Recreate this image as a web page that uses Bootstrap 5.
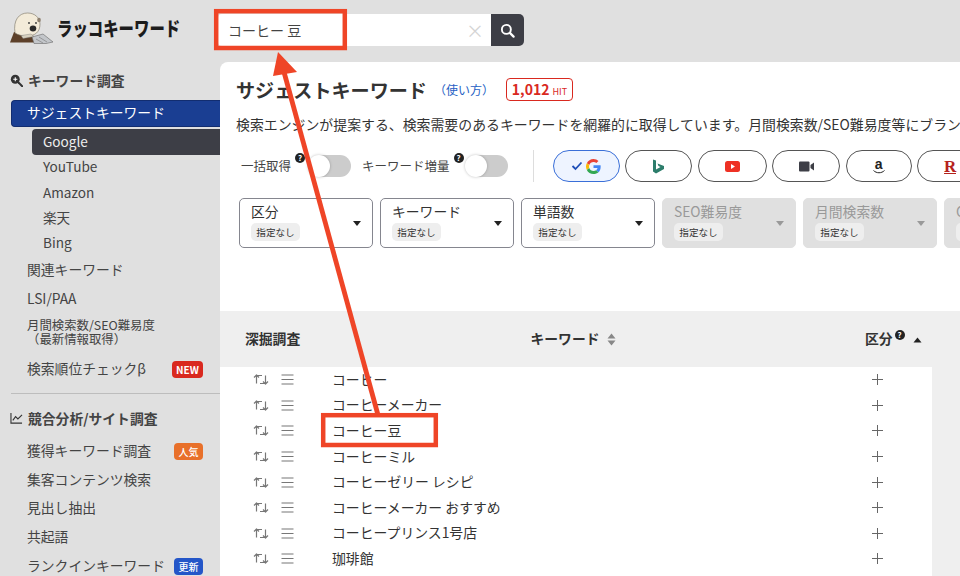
<!DOCTYPE html>
<html lang="ja">
<head>
<meta charset="utf-8">
<title>ラッコキーワード</title>
<link href="https://cdn.jsdelivr.net/npm/bootstrap@5.3.0/dist/css/bootstrap.min.css" rel="stylesheet">
<style>
html,body{height:100%;overflow:hidden}
body{background:#e0e0e0;color:#333;font-family:"Noto Sans CJK JP","Noto Sans",sans-serif;font-size:13.8px;width:960px;height:576px;position:relative}
.top-bar{height:62px;padding:0 0 2px 10px}
.brand-mark{width:46px;height:36px;flex:none}
.brand-name{font-weight:900;font-size:19.5px;color:#1c1c1c;display:inline-block;transform:scaleX(.79);transform-origin:left center;width:161px;margin:-5px 0 0 1px;white-space:nowrap;line-height:1}
.search-wrap{width:306px;height:32px}
.search-field{flex:1;background:#fff;display:flex;align-items:center;padding:0 10px;font-size:14px;color:#444;justify-content:space-between;border-radius:4px 0 0 4px}
.search-x{color:#d4d4d4;font-size:18px;line-height:1;margin-right:-3px}
.search-go{width:33px;background:#3d3e46;border-radius:0 5px 5px 0;padding:0;border:0}
.page-body{height:514px}
.side-col{width:220px;flex:none}
.side-col>*{flex:none}
.side-head{font-weight:700;color:#444;padding-left:10px;gap:5px;height:28px;padding-bottom:2px}
.side-head.first{height:24px;margin-top:7px}
.side-item{color:#444;display:flex;align-items:center;justify-content:space-between;padding:0 17px 2px 27px;height:28.7px;text-decoration:none;white-space:nowrap}
.side-item.current{background:#1a3e92;color:#fff;height:27px;margin:7px 0 0 11px;padding-left:15px;border-radius:4px 0 0 4px;border:1px solid #122d70;border-right:0}
.side-sub{color:#444;display:flex;align-items:center;height:25.3px;padding:0 0 2px 43px;text-decoration:none;font-size:13.6px}
.side-sub.current{background:#3d3e46;color:#eee;height:26px;margin:2px 0 0 32px;padding-left:11px;border-radius:4px 0 0 4px}
.side-item.two-line{height:40px;font-size:12.4px;display:block;padding-top:4.400px}
.two-line span{display:block;height:14px;line-height:14px}
.side-item.tall{height:31px}
.side-item .tag-mini{margin-bottom:-2px}
.side-rule{border-top:1px solid #bdbdbd;margin:8px 0 11.500px 11px;opacity:1}
.tag-mini{font-size:10px;font-weight:700;color:#fff;border-radius:4px;height:17px;line-height:17px;padding:0;text-align:center;width:29px;display:block}
.tag-new{background:#d9291f;width:31px}
.tag-pop{background:#e8702a;font-weight:500}
.tag-upd{background:#2456c8;font-weight:500}
.main-col{flex:1;min-width:0;background:#fff;border-radius:8px 0 0 0;overflow:hidden}
.head-block{height:249px;padding:16px 0 0 16px;overflow:hidden}
.page-title{font-size:19.1px;font-weight:700;color:#333;margin:0;line-height:20px;white-space:nowrap}
.how-link{color:#1f5fc4;font-size:12px;text-decoration:none;margin-left:7px;white-space:nowrap}
.hit-pill{border:1px solid #d9291f;border-radius:4px;color:#d9291f;font-weight:700;font-size:14px;height:23px;width:67px;margin-left:12px;line-height:21px;text-align:center;white-space:nowrap}
.hit-pill span{font-size:9px;font-weight:400;margin-left:3px}
.lede{font-size:13.9px;margin:13px 0 0;white-space:nowrap;line-height:20px;color:#333}
.ctrl-row{height:42px;margin-top:11px;padding-left:5px;white-space:nowrap}
.tgl-label{font-size:12.5px;color:#444}
.tgl-label.second{margin-left:11px}
.q-dot{width:10px;height:10px;border-radius:50%;background:#222;color:#fff;font-size:8px;font-weight:700;line-height:10px;text-align:center;display:inline-block;flex:none}
.ctrl-row .q-dot{align-self:flex-start;margin:8px 0 0 4px}
.tgl{width:39px;height:22px;border-radius:11px;background:#ccc;position:relative;flex:none;margin-left:7px}
.tgl.second{margin-left:5px}
.tgl::before{content:"";position:absolute;left:-4px;top:0;width:22px;height:22px;border-radius:50%;background:#fff;box-shadow:0 0 3px rgba(0,0,0,.25)}
.v-rule{width:1px;height:32px;background:#ddd;margin:0 19px 0 25px;flex:none}
.chan-set{gap:5.500px}
.chan{height:32px;border:1px solid #555;border-radius:16px;background:#fff;flex:none;display:flex;align-items:center;justify-content:center;gap:3px;padding:0;width:67px}
.chan.on{border-color:#3a6fd8;background:#eef4ff}
.chan.w69{width:69px}.chan.w68{width:68px}.chan.w66{width:66px}
.chan.last{justify-content:flex-start;padding-left:26px}
.amz{font-family:"Liberation Sans",sans-serif;font-weight:700;font-size:14px;color:#222;line-height:12px;display:flex;flex-direction:column;align-items:center}
.rak{font-family:"Liberation Serif",serif;font-weight:700;font-size:17px;color:#b5221c;line-height:1;border-bottom:1px solid #b5221c;height:16px}
.filter-row{gap:7px;margin-top:11px;margin-left:3px}
.filter-box{width:134px;height:50px;border:1px solid #85868f;border-radius:5px;flex:none;position:relative;padding:2px 11px;background:#fff;line-height:20px;white-space:nowrap}
.filter-box.off{background:#e0e0e0;border-color:#e0e0e0;color:#999}
.none-chip{background:#eee;color:#333;border-radius:5px;font-size:9.600px;display:block;width:49px;height:18px;line-height:18px;text-align:center;margin:2px 0 0}
.down-tri{position:absolute;right:11px;top:22px;width:0;height:0;border:4.500px solid transparent;border-top:5px solid #222;border-bottom:0}
.filter-box.off .down-tri{border-top-color:#999}
.kw-shell{background:#efefef}
.kw-table{width:740px;table-layout:fixed;margin:0;--bs-table-bg:transparent;border-collapse:collapse}
.kw-table col:nth-child(1){width:112px}
.kw-table col:nth-child(2){width:490px}
.kw-table col:nth-child(3){width:110px}
.kw-table col:nth-child(4){width:28px}
.kw-table th{height:56px;vertical-align:middle;font-weight:700;background:#efefef;padding:0 0 2px;font-size:13.800px;color:#333;border:0;box-shadow:none;white-space:nowrap}
.kw-table th:nth-child(1){padding-left:25px}
.kw-table th:nth-child(2){padding-right:7px}
.kw-table th:nth-child(3){padding-left:43px}
.kw-table th .q-dot{margin:0 0 0 2px;vertical-align:6px}
.kw-table td{height:25.600px;padding:0;background:#fff;vertical-align:middle;border:0;font-size:13.850px;color:#333;line-height:1;box-shadow:none;white-space:nowrap}
.kw-table td.edge{background:#efefef}
.row-tools{display:flex;gap:12px;padding-left:33px;align-items:center}
.plus-mark{display:block;margin:0 auto 0 50px}
.sort-tri{display:inline-block;vertical-align:middle;margin-left:6px}
.sort-tri.up{margin-left:8px}
.mark-layer{position:absolute;left:0;top:0;pointer-events:none}
</style>
</head>
<body>
<svg width="0" height="0" class="position-absolute" aria-hidden="true">
  <symbol id="ic-loop" viewBox="0 0 16 13"><path d="M3.500 10.500V3.500Q3.500 2.500 4.500 2.500H9M1 4.500 3.500 2 6 4.500M12.500 2.500V9.500Q12.500 10.500 11.500 10.500H7M10 8.500 12.500 11 15 8.500" fill="none" stroke="#777" stroke-width="1.200" stroke-linejoin="round"/></symbol>
  <symbol id="ic-bars" viewBox="0 0 13 11"><path d="M.5 1h12M.5 5.500h12M.5 10h12" stroke="#777" stroke-width="1.200"/></symbol>
  <symbol id="ic-plus" viewBox="0 0 11 11"><path d="M5.500 0v11M0 5.500h11" stroke="#666" stroke-width="1"/></symbol>
</svg>
<header class="top-bar d-flex align-items-center">
  <svg class="brand-mark" viewBox="0 0 46 36" aria-hidden="true">
    <path d="M0 30.500 4 20 22 22 27 30.500Z" fill="#5d4029"/>
    <path d="M5 21C3 8 9 1 17.500 1 25 1 30 6 30 12 30 20 25 24 17 24 12 24 8 23 5 21Z" fill="#f3ebd9" stroke="#77705f" stroke-width=".6"/>
    <ellipse cx="29" cy="8" rx="1.800" ry="2.200" fill="#8d7f6e"/>
    <circle cx="19" cy="11" r=".9" fill="#333"/><circle cx="26" cy="11" r=".9" fill="#333"/>
    <ellipse cx="23" cy="16.500" rx="3.300" ry="3" fill="#2b2a2a"/>
    <path d="M22 25 33 22 43 30 36 31.500 24 31.500Z" fill="#c3c6ca" stroke="#666" stroke-width=".6"/>
    <path d="M29 25l8 5M26 27l7 4" stroke="#777" stroke-width=".6"/>
    <path d="M11 23.500l10-1.500 3 2.500-11 2Z" fill="#d8d1bf" stroke="#777" stroke-width=".4"/>
  </svg>
  <span class="brand-name">ラッコキーワード</span>
  <div class="search-wrap d-flex">
    <div class="search-field"><span>コーヒー 豆</span><span class="search-x">×</span></div>
    <button class="btn search-go d-flex align-items-center justify-content-center" type="button" aria-label="検索">
      <svg width="15" height="15" viewBox="0 0 16 16"><circle cx="6.800" cy="6.800" r="4.800" fill="none" stroke="#fff" stroke-width="2"/><path d="M10.500 10.500 14.500 14.500" stroke="#fff" stroke-width="2.400" stroke-linecap="round"/></svg>
    </button>
  </div>
</header>
<div class="page-body d-flex">
  <nav class="side-col d-flex flex-column">
    <div class="side-head first d-flex align-items-center">
      <svg width="13" height="13" viewBox="0 0 16 16"><circle cx="6.500" cy="6.500" r="5.500" fill="#333"/><path d="M10.500 10.500 15 15" stroke="#333" stroke-width="2.400" stroke-linecap="round"/><path d="M4 6.500h5M6.500 4v5" stroke="#fff" stroke-width="1.300"/></svg>
      <span>キーワード調査</span>
    </div>
    <a class="side-item current" href="#">サジェストキーワード</a>
    <a class="side-sub current" href="#">Google</a>
    <a class="side-sub" href="#">YouTube</a>
    <a class="side-sub" href="#">Amazon</a>
    <a class="side-sub" href="#">楽天</a>
    <a class="side-sub" href="#">Bing</a>
    <a class="side-item" href="#">関連キーワード</a>
    <a class="side-item" href="#">LSI/PAA</a>
    <a class="side-item two-line" href="#"><span>月間検索数/SEO難易度</span><span>（最新情報取得）</span></a>
    <a class="side-item tall" href="#"><span>検索順位チェックβ</span><span class="tag-mini tag-new">NEW</span></a>
    <hr class="side-rule">
    <div class="side-head d-flex align-items-center">
      <svg width="13" height="12" viewBox="0 0 14 13"><path d="M1 1v11h12" fill="none" stroke="#333" stroke-width="1.200"/><path d="M3 9l3-4 2.500 2.500L13 3" fill="none" stroke="#333" stroke-width="1.200"/></svg>
      <span>競合分析/サイト調査</span>
    </div>
    <a class="side-item mt-1" href="#"><span>獲得キーワード調査</span><span class="tag-mini tag-pop">人気</span></a>
    <a class="side-item" href="#">集客コンテンツ検索</a>
    <a class="side-item" href="#">見出し抽出</a>
    <a class="side-item" href="#">共起語</a>
    <a class="side-item" href="#"><span>ランクインキーワード</span><span class="tag-mini tag-upd">更新</span></a>
  </nav>
  <main class="main-col">
    <section class="head-block">
      <div class="d-flex align-items-center">
        <h1 class="page-title">サジェストキーワード</h1>
        <a class="how-link" href="#">（使い方）</a>
        <div class="hit-pill">1,012<span>HIT</span></div>
      </div>
      <p class="lede">検索エンジンが提案する、検索需要のあるキーワードを網羅的に取得しています。月間検索数/SEO難易度等にブランド</p>
      <div class="ctrl-row d-flex align-items-center">
        <span class="tgl-label">一括取得</span><span class="q-dot">?</span><span class="tgl"></span>
        <span class="tgl-label second">キーワード増量</span><span class="q-dot">?</span><span class="tgl second"></span>
        <span class="v-rule"></span>
        <div class="d-flex chan-set">
          <button class="chan on" type="button" aria-label="Google">
            <svg width="12" height="10" viewBox="0 0 12 10"><path d="M1.500 5 4.500 8 10.500 1.500" fill="none" stroke="#1f4fb8" stroke-width="1.800"/></svg>
            <svg width="15" height="15" viewBox="0 0 48 48"><path fill="#EA4335" d="M24 9.500c3.500 0 6.700 1.300 9.100 3.500l6.800-6.800C35.800 2.400 30.300 0 24 0 14.600 0 6.500 5.400 2.600 13.200l7.900 6.200C12.400 13.600 17.700 9.500 24 9.500z"/><path fill="#4285F4" d="M46.900 24.500c0-1.600-.1-3.100-.4-4.500H24v9h12.900c-.6 3-2.200 5.500-4.700 7.200l7.700 6c4.500-4.200 7-10.300 7-17.700z"/><path fill="#FBBC05" d="M10.500 28.600c-.5-1.400-.8-3-.8-4.600s.3-3.200.8-4.600l-7.900-6.200C.9 16.500 0 20.100 0 24s.9 7.500 2.600 10.800l7.900-6.200z"/><path fill="#34A853" d="M24 48c6.500 0 11.900-2.100 15.900-5.800l-7.700-6c-2.200 1.400-4.900 2.300-8.200 2.300-6.300 0-11.600-4.200-13.500-9.900l-7.900 6.200C6.500 42.600 14.600 48 24 48z"/></svg>
          </button>
          <button class="chan" type="button" aria-label="Bing">
            <svg width="13" height="15" viewBox="0 0 13 15"><path d="M1 0.500 4 1.500V10.500L8.500 8 6.500 7 5.500 4.500 12 7V10L4 14.500 1 12.500Z" fill="#2c7d6b"/></svg>
          </button>
          <button class="chan w69" type="button" aria-label="YouTube">
            <svg width="15" height="11" viewBox="0 0 15 11"><rect width="15" height="11" rx="2.500" fill="#ee3124"/><path d="M6 3 10 5.500 6 8Z" fill="#fff"/></svg>
          </button>
          <button class="chan w68" type="button" aria-label="動画">
            <svg width="15" height="11" viewBox="0 0 15 11"><rect width="10.500" height="10" y=".5" rx="1" fill="#3d3e46"/><path d="M11.500 4 15 1.500V9.500L11.500 7Z" fill="#3d3e46"/></svg>
          </button>
          <button class="chan w66" type="button" aria-label="Amazon">
            <span class="amz">a<svg width="12" height="4" viewBox="0 0 12 4"><path d="M.5 .5C3.500 3.500 8.500 3.500 11.500 .5" fill="none" stroke="#222" stroke-width="1"/></svg></span>
          </button>
          <button class="chan w66 last" type="button" aria-label="楽天">
            <span class="rak">R</span>
          </button>
        </div>
      </div>
      <div class="filter-row d-flex">
        <div class="filter-box">区分<span class="none-chip">指定なし</span><i class="down-tri"></i></div>
        <div class="filter-box">キーワード<span class="none-chip">指定なし</span><i class="down-tri"></i></div>
        <div class="filter-box">単語数<span class="none-chip">指定なし</span><i class="down-tri"></i></div>
        <div class="filter-box off">SEO難易度<span class="none-chip">指定なし</span><i class="down-tri"></i></div>
        <div class="filter-box off">月間検索数<span class="none-chip">指定なし</span><i class="down-tri"></i></div>
        <div class="filter-box off">CPC<span class="none-chip">指定なし</span><i class="down-tri"></i></div>
      </div>
    </section>
    <section class="kw-shell">
      <table class="table table-borderless kw-table">
        <colgroup><col><col><col><col></colgroup>
        <thead>
          <tr>
            <th>深掘調査</th>
            <th class="text-center">キーワード<svg class="sort-tri ms-2" width="9" height="13" viewBox="0 0 9 13"><path d="M4.500 .5 8.500 5.500H.5ZM4.500 12.500 .5 7.500H8.500Z" fill="#888"/></svg></th>
            <th>区分<span class="q-dot">?</span><svg class="sort-tri up" width="9" height="6" viewBox="0 0 9 6"><path d="M4.500 .5 8.500 5.500H.5Z" fill="#222"/></svg></th>
            <th></th>
          </tr>
        </thead>
        <tbody>
          <tr><td><div class="row-tools"><svg width="16" height="13"><use href="#ic-loop"/></svg><svg width="13" height="11"><use href="#ic-bars"/></svg></div></td><td>コーヒー</td><td><svg class="plus-mark" width="11" height="11"><use href="#ic-plus"/></svg></td><td class="edge"></td></tr>
          <tr><td><div class="row-tools"><svg width="16" height="13"><use href="#ic-loop"/></svg><svg width="13" height="11"><use href="#ic-bars"/></svg></div></td><td>コーヒーメーカー</td><td><svg class="plus-mark" width="11" height="11"><use href="#ic-plus"/></svg></td><td class="edge"></td></tr>
          <tr><td><div class="row-tools"><svg width="16" height="13"><use href="#ic-loop"/></svg><svg width="13" height="11"><use href="#ic-bars"/></svg></div></td><td>コーヒー豆</td><td><svg class="plus-mark" width="11" height="11"><use href="#ic-plus"/></svg></td><td class="edge"></td></tr>
          <tr><td><div class="row-tools"><svg width="16" height="13"><use href="#ic-loop"/></svg><svg width="13" height="11"><use href="#ic-bars"/></svg></div></td><td>コーヒーミル</td><td><svg class="plus-mark" width="11" height="11"><use href="#ic-plus"/></svg></td><td class="edge"></td></tr>
          <tr><td><div class="row-tools"><svg width="16" height="13"><use href="#ic-loop"/></svg><svg width="13" height="11"><use href="#ic-bars"/></svg></div></td><td>コーヒーゼリー レシピ</td><td><svg class="plus-mark" width="11" height="11"><use href="#ic-plus"/></svg></td><td class="edge"></td></tr>
          <tr><td><div class="row-tools"><svg width="16" height="13"><use href="#ic-loop"/></svg><svg width="13" height="11"><use href="#ic-bars"/></svg></div></td><td>コーヒーメーカー おすすめ</td><td><svg class="plus-mark" width="11" height="11"><use href="#ic-plus"/></svg></td><td class="edge"></td></tr>
          <tr><td><div class="row-tools"><svg width="16" height="13"><use href="#ic-loop"/></svg><svg width="13" height="11"><use href="#ic-bars"/></svg></div></td><td>コーヒープリンス1号店</td><td><svg class="plus-mark" width="11" height="11"><use href="#ic-plus"/></svg></td><td class="edge"></td></tr>
          <tr><td><div class="row-tools"><svg width="16" height="13"><use href="#ic-loop"/></svg><svg width="13" height="11"><use href="#ic-bars"/></svg></div></td><td>珈琲館</td><td><svg class="plus-mark" width="11" height="11"><use href="#ic-plus"/></svg></td><td class="edge"></td></tr>
          <tr><td></td><td></td><td></td><td class="edge"></td></tr>
        </tbody>
      </table>
    </section>
  </main>
</div>
<svg class="mark-layer" width="960" height="576" viewBox="0 0 960 576" aria-hidden="true">
  <rect x="216.200" y="11.200" width="128.600" height="36.800" fill="none" stroke="#ef4527" stroke-width="4.500"/>
  <rect x="323.200" y="415.200" width="112.600" height="29.800" fill="none" stroke="#ef4527" stroke-width="4.500"/>
  <path d="M284 72 378 415" stroke="#ef4527" stroke-width="4.800"/>
  <path d="M278 52 297 72 273 76Z" fill="#ef4527"/>
</svg>
<script src="https://cdn.jsdelivr.net/npm/bootstrap@5.3.0/dist/js/bootstrap.bundle.min.js"></script>
</body>
</html>
